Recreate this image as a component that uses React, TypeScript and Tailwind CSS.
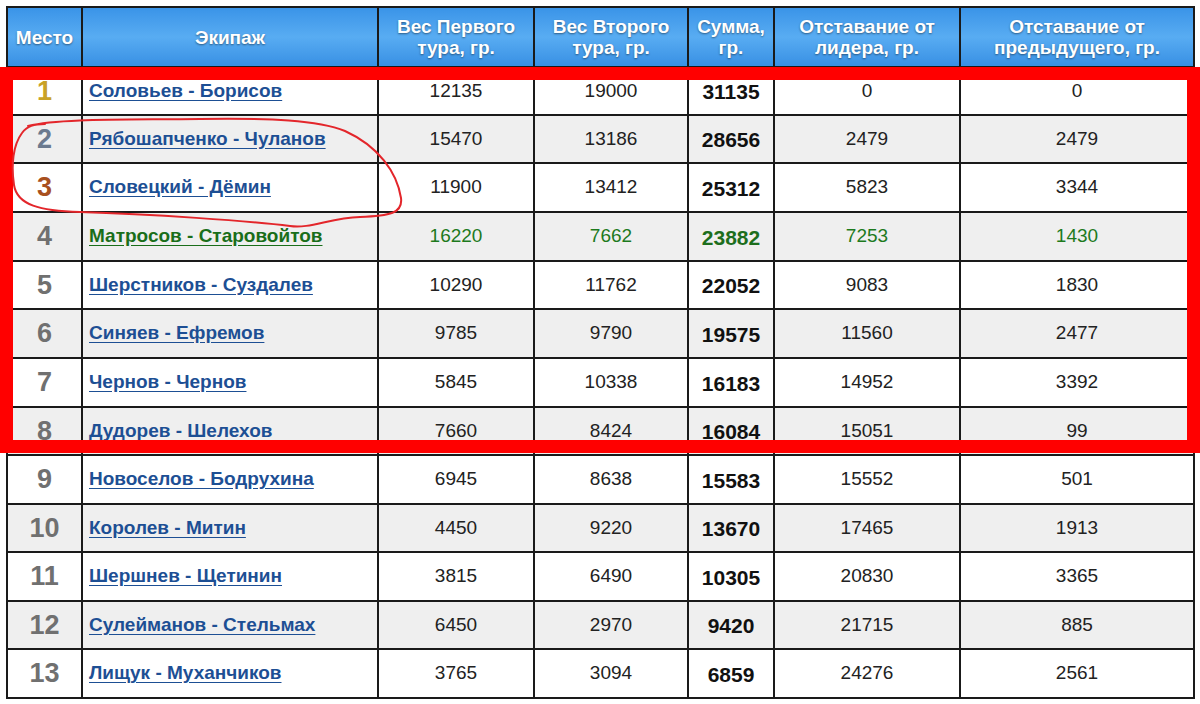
import React from "react";

type Row = {
  place: number;
  name: string;
  t1: string;
  t2: string;
  sum: string;
  lead: string;
  prev: string;
  h: number;
};

const rows: Row[] = [
  { place: 1, name: "Соловьев - Борисов", t1: "12135", t2: "19000", sum: "31135", lead: "0", prev: "0", h: 48 },
  { place: 2, name: "Рябошапченко - Чуланов", t1: "15470", t2: "13186", sum: "28656", lead: "2479", prev: "2479", h: 48 },
  { place: 3, name: "Словецкий - Дёмин", t1: "11900", t2: "13412", sum: "25312", lead: "5823", prev: "3344", h: 49 },
  { place: 4, name: "Матросов - Старовойтов", t1: "16220", t2: "7662", sum: "23882", lead: "7253", prev: "1430", h: 49 },
  { place: 5, name: "Шерстников - Суздалев", t1: "10290", t2: "11762", sum: "22052", lead: "9083", prev: "1830", h: 48 },
  { place: 6, name: "Синяев - Ефремов", t1: "9785", t2: "9790", sum: "19575", lead: "11560", prev: "2477", h: 49 },
  { place: 7, name: "Чернов - Чернов", t1: "5845", t2: "10338", sum: "16183", lead: "14952", prev: "3392", h: 49 },
  { place: 8, name: "Дудорев - Шелехов", t1: "7660", t2: "8424", sum: "16084", lead: "15051", prev: "99", h: 48 },
  { place: 9, name: "Новоселов - Бодрухина", t1: "6945", t2: "8638", sum: "15583", lead: "15552", prev: "501", h: 49 },
  { place: 10, name: "Королев - Митин", t1: "4450", t2: "9220", sum: "13670", lead: "17465", prev: "1913", h: 48 },
  { place: 11, name: "Шершнев - Щетинин", t1: "3815", t2: "6490", sum: "10305", lead: "20830", prev: "3365", h: 49 },
  { place: 12, name: "Сулейманов - Стельмах", t1: "6450", t2: "2970", sum: "9420", lead: "21715", prev: "885", h: 48 },
  { place: 13, name: "Лищук - Муханчиков", t1: "3765", t2: "3094", sum: "6859", lead: "24276", prev: "2561", h: 49 },
];

function placeColor(p: number) {
  if (p === 1) return "text-[#c9a227]";
  if (p === 2) return "text-[#6b7a8f]";
  if (p === 3) return "text-[#a8501e]";
  return "text-[#707070]";
}

const th =
  "border-2 border-[#1a1a1a] bg-gradient-to-b from-[#3a94e8] via-[#58acf2] to-[#3890e4] text-white font-bold text-[19px] leading-[21px] text-center align-middle [text-shadow:0_1px_2px_rgba(0,0,0,0.45)]";
const td = "border-2 border-[#1a1a1a] text-center align-middle p-0";

export default function App() {
  return (
    <div className="relative w-[1200px] h-[704px] bg-white overflow-hidden font-['Liberation_Sans',Arial,sans-serif]">
      <div className="pt-[6px] pl-[6px]">
        <table className="table-fixed border-collapse w-[1187px]">
          <colgroup>
            <col className="w-[75px]" />
            <col className="w-[296px]" />
            <col className="w-[156px]" />
            <col className="w-[154px]" />
            <col className="w-[86px]" />
            <col className="w-[186px]" />
            <col className="w-[234px]" />
          </colgroup>
          <thead>
            <tr className="h-[60px]">
              <th className={th}>Место</th>
              <th className={th}>Экипаж</th>
              <th className={th}>
                Вес Первого
                <br />
                тура, гр.
              </th>
              <th className={th}>
                Вес Второго
                <br />
                тура, гр.
              </th>
              <th className={th}>
                Сумма,
                <br />
                гр.
              </th>
              <th className={th}>
                Отставание от
                <br />
                лидера, гр.
              </th>
              <th className={th}>
                Отставание от
                <br />
                предыдущего, гр.
              </th>
            </tr>
          </thead>
          <tbody>
            {rows.map((r) => {
              const green = r.place === 4;
              const bg = r.place % 2 === 0 ? "bg-[#efefef]" : "bg-white";
              const num = green ? "text-[#1d7a1d]" : "text-[#222]";
              return (
                <tr key={r.place} className={bg} style={{ height: r.h }}>
                  <td className={`${td} font-bold text-[27px] ${placeColor(r.place)}`}>{r.place}</td>
                  <td className={`${td} text-left pl-[6px]`}>
                    <a
                      href="#"
                      className={`font-bold text-[19px] underline underline-offset-[3px] ${
                        green ? "text-[#1a6e1a]" : "text-[#1d4f94]"
                      }`}
                    >
                      {r.name}
                    </a>
                  </td>
                  <td className={`${td} text-[19px] ${num}`}>{r.t1}</td>
                  <td className={`${td} text-[19px] ${num}`}>{r.t2}</td>
                  <td
                    className={`${td} text-[21px] pt-[2px] font-bold ${green ? "text-[#1d6e1d]" : "text-[#111]"}`}
                  >
                    {r.sum}
                  </td>
                  <td className={`${td} text-[19px] ${num}`}>{r.lead}</td>
                  <td className={`${td} text-[19px] ${num}`}>{r.prev}</td>
                </tr>
              );
            })}
          </tbody>
        </table>
      </div>

      {/* red highlight frame */}
      <div className="absolute left-0 top-[67px] w-[1200px] h-[386px] border-[13px] border-[#ff0000] pointer-events-none" />

      {/* hand-drawn ellipse */}
      <svg
        className="absolute left-0 top-0 pointer-events-none"
        width="1200"
        height="704"
        viewBox="0 0 1200 704"
      >
        <path
          d="M 28 126 C 60 118, 130 120, 200 119 C 270 118, 318 120, 345 131 C 378 146, 397 172, 401 198 C 403 213, 390 216, 360 217 C 330 218, 310 229, 290 226 C 250 221, 150 214, 80 212 C 40 211, 17 205, 14 185 C 11 165, 13 145, 22 133 C 27 126, 34 124, 45 124"
          fill="none"
          stroke="#e3262b"
          strokeWidth="2"
          strokeLinecap="round"
          strokeLinejoin="round"
        />
      </svg>
    </div>
  );
}
